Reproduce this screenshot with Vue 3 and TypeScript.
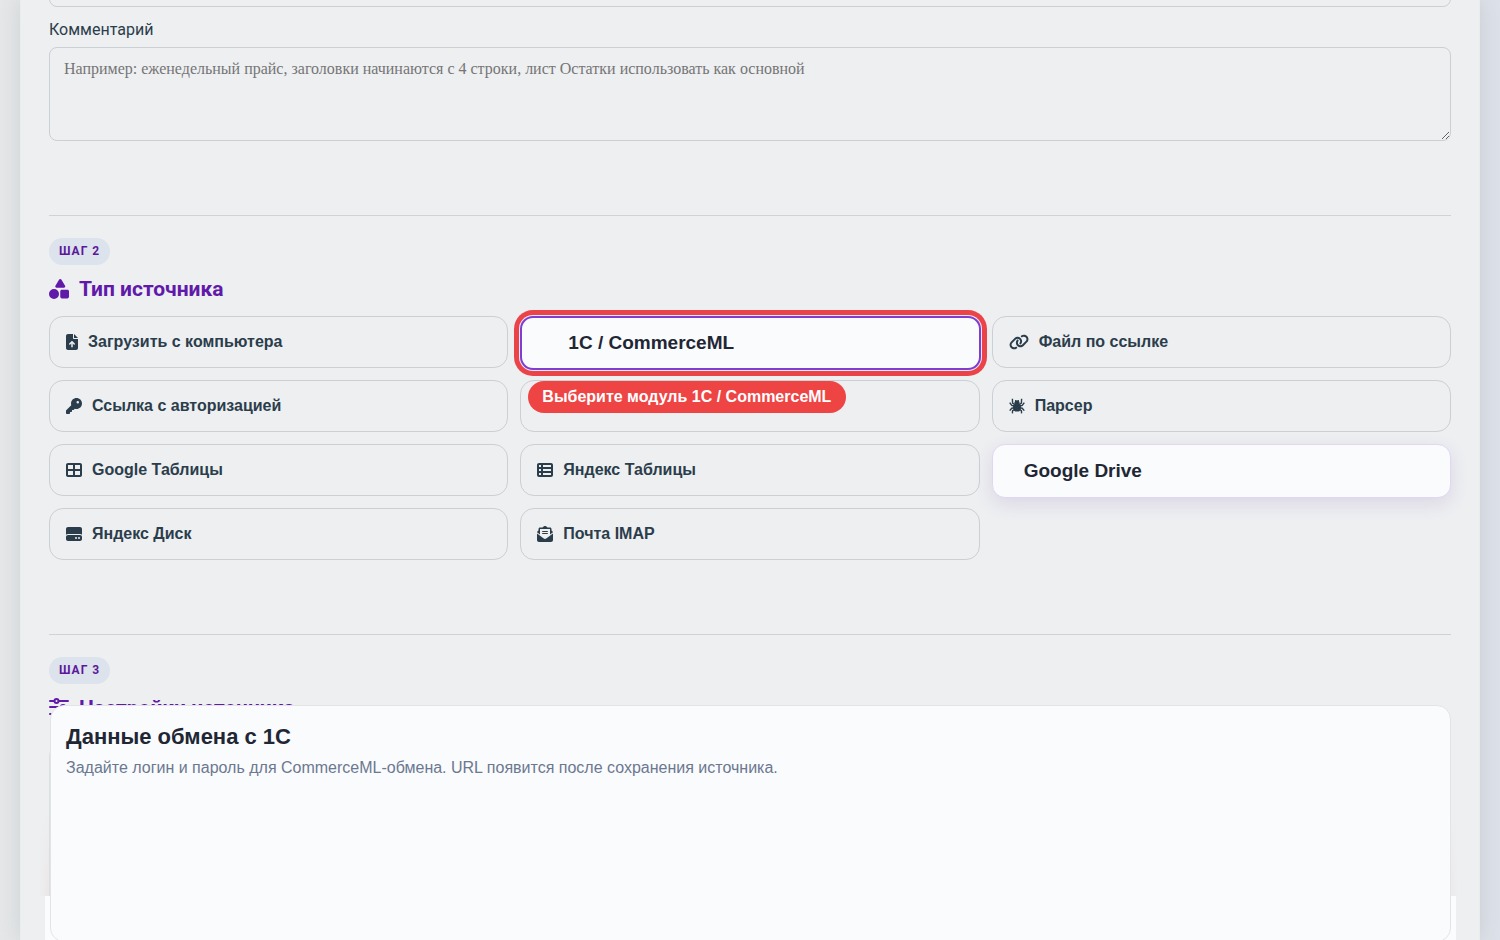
<script setup lang="ts">
import { ref } from 'vue'

interface Icon {
  w: number
  d: string
}

interface Source {
  id: string
  label: string
  icon?: string
  kind?: 'selected' | 'raised' | 'covered'
}

const icons: Record<string, Icon> = {
  file: { w: 384, d: 'M64 0C28.7 0 0 28.7 0 64L0 448c0 35.3 28.7 64 64 64l256 0c35.3 0 64-28.7 64-64l0-288-128 0c-17.7 0-32-14.3-32-32L224 0 64 0zM256 0l0 128 128 0L256 0zM216 408c0 13.3-10.7 24-24 24s-24-10.7-24-24l0-102.1-31 31c-9.4 9.4-24.6 9.4-33.9 0s-9.4-24.6 0-33.9l72-72c9.4-9.4 24.6-9.4 33.9 0l72 72c9.4 9.4 9.4 24.6 0 33.9s-24.6 9.4-33.9 0l-31-31L216 408z' },
  link: { w: 640, d: 'M579.8 267.7c56.5-56.5 56.5-148 0-204.5c-50-50-128.8-56.5-186.3-15.4l-1.6 1.1c-14.4 10.3-17.7 30.3-7.4 44.6s30.3 17.7 44.6 7.4l1.6-1.1c32.1-22.9 76-19.3 103.8 8.6c31.5 31.5 31.5 82.5 0 114L422.3 334.8c-31.5 31.5-82.5 31.5-114 0c-27.9-27.9-31.5-71.8-8.6-103.8l1.1-1.6c10.3-14.4 6.9-34.4-7.4-44.6s-34.4-6.9-44.6 7.4l-1.1 1.6C206.5 251.2 213 330 263 380c56.5 56.5 148 56.5 204.5 0L579.8 267.7zM60.2 244.3c-56.5 56.5-56.5 148 0 204.5c50 50 128.8 56.5 186.3 15.4l1.6-1.1c14.4-10.3 17.7-30.3 7.4-44.6s-30.3-17.7-44.6-7.4l-1.6 1.1c-32.1 22.9-76 19.3-103.8-8.6C74 372 74 321 105.5 289.5L217.7 177.2c31.5-31.5 82.5-31.5 114 0c27.9 27.9 31.5 71.8 8.6 103.9l-1.1 1.6c-10.3 14.4-6.9 34.4 7.4 44.6s34.4 6.9 44.6-7.4l1.1-1.6C433.5 260.8 427 182 377 132c-56.5-56.5-148-56.5-204.5 0L60.2 244.3z' },
  key: { w: 512, d: 'M336 352c97.2 0 176-78.8 176-176S433.2 0 336 0S160 78.8 160 176c0 18.7 2.9 36.8 8.3 53.7L7 391c-4.5 4.5-7 10.6-7 17l0 80c0 13.3 10.7 24 24 24l80 0c13.3 0 24-10.7 24-24l0-40 40 0c13.3 0 24-10.7 24-24l0-40 40 0c6.4 0 12.5-2.5 17-7l33.3-33.3c16.9 5.4 35 8.3 53.7 8.3zM376 96a40 40 0 1 1 0 80 40 40 0 1 1 0-80z' },
  grid: { w: 512, d: 'M448 96l0 128-160 0 0-128 160 0zm0 192l0 128-160 0 0-128 160 0zM224 224L64 224 64 96l160 0 0 128zM64 288l160 0 0 128L64 416l0-128zM64 32C28.7 32 0 60.7 0 96L0 416c0 35.3 28.7 64 64 64l384 0c35.3 0 64-28.7 64-64l0-320c0-35.3-28.7-64-64-64L64 32z' },
  list: { w: 512, d: 'M0 96C0 60.7 28.7 32 64 32l384 0c35.3 0 64 28.7 64 64l0 320c0 35.3-28.7 64-64 64L64 480c-35.3 0-64-28.7-64-64L0 96zm64 0l0 64 64 0 0-64L64 96zm384 0L192 96l0 64 256 0 0-64zM64 224l0 64 64 0 0-64-64 0zm384 0l-256 0 0 64 256 0 0-64zM64 352l0 64 64 0 0-64-64 0zm384 0l-256 0 0 64 256 0 0-64z' },
  drive: { w: 512, d: 'M0 96C0 60.7 28.7 32 64 32l384 0c35.3 0 64 28.7 64 64l0 184.4c-17-15.2-39.4-24.4-64-24.4L64 256c-24.6 0-47 9.2-64 24.4L0 96zM64 288l384 0c35.3 0 64 28.7 64 64l0 64c0 35.3-28.7 64-64 64L64 480c-35.3 0-64-28.7-64-64l0-64c0-35.3 28.7-64 64-64zM320 416a32 32 0 1 0 0-64 32 32 0 1 0 0 64zm128-32a32 32 0 1 0 -64 0 32 32 0 1 0 64 0z' },
  mail: { w: 512, d: 'M215.4 96L144 96l-36.2 0L96 96l0 8.8L96 144l0 40.4 0 89L.2 202.5c1.6-18.1 10.9-34.9 25.7-45.8L48 140.3 48 96c0-26.5 21.5-48 48-48l76.6 0 49.9-36.9C232.2 3.9 243.9 0 256 0s23.8 3.9 33.5 11L339.4 48 416 48c26.5 0 48 21.5 48 48l0 44.3 22.1 16.4c14.8 10.9 24.1 27.7 25.7 45.8L416 273.4l0-89 0-40.4 0-39.2 0-8.8-11.8 0L368 96l-71.4 0-81.3 0zM0 448L0 242.1 217.6 403.3c11.1 8.2 24.6 12.7 38.4 12.7s27.3-4.4 38.4-12.7L512 242.1 512 448c0 35.3-28.7 64-64 64L64 512c-35.3 0-64-28.7-64-64zM176 160l160 0c8.8 0 16 7.2 16 16s-7.2 16-16 16l-160 0c-8.8 0-16-7.2-16-16s7.2-16 16-16zm0 64l160 0c8.8 0 16 7.2 16 16s-7.2 16-16 16l-160 0c-8.8 0-16-7.2-16-16s7.2-16 16-16z' },
}

const sources: Source[] = [
  { id: 'upload', label: 'Загрузить с компьютера', icon: 'file' },
  { id: 'cml', label: '1С / CommerceML', kind: 'selected' },
  { id: 'url', label: 'Файл по ссылке', icon: 'link' },
  { id: 'auth', label: 'Ссылка с авторизацией', icon: 'key' },
  { id: 'api', label: '', kind: 'covered' },
  { id: 'parser', label: 'Парсер', icon: 'spider' },
  { id: 'gsheets', label: 'Google Таблицы', icon: 'grid' },
  { id: 'ysheets', label: 'Яндекс Таблицы', icon: 'list' },
  { id: 'gdrive', label: 'Google Drive', kind: 'raised' },
  { id: 'ydisk', label: 'Яндекс Диск', icon: 'drive' },
  { id: 'imap', label: 'Почта IMAP', icon: 'mail' },
]

const name = ref('')
const comment = ref('')
const current = ref('cml')
</script>

<template>
  <div class="page">
    <main class="panel">
      <section class="fields">
        <input v-model="name" class="control name" type="text" aria-label="Название" />
        <label class="caption" for="comment">Комментарий</label>
        <textarea
          id="comment"
          v-model="comment"
          class="control comment"
          placeholder="Например: еженедельный прайс, заголовки начинаются с 4 строки, лист Остатки использовать как основной"
        ></textarea>
      </section>

      <section class="step">
        <span class="badge">ШАГ 2</span>
        <h2 class="title">
          <svg class="title-icon" viewBox="0 0 512 512" aria-hidden="true">
            <path d="M315.4 15.5C309.7 5.9 299.2 0 288 0s-21.7 5.9-27.4 15.5l-96 160c-5.9 9.9-6.1 22.2-.4 32.2s16.3 16.2 27.8 16.2l192 0c11.5 0 22.2-6.2 27.8-16.2s5.5-22.3-.4-32.2l-96-160zM288 312l0 144c0 22.1 17.9 40 40 40l144 0c22.1 0 40-17.9 40-40l0-144c0-22.1-17.9-40-40-40l-144 0c-22.1 0-40 17.9-40 40zM128 512a128 128 0 1 0 0-256 128 128 0 1 0 0 256z" />
          </svg>
          Тип источника
        </h2>
        <div class="sources">
          <div v-for="s in sources" :key="s.id" class="cell">
            <button
              type="button"
              class="source"
              :class="s.kind"
              :aria-pressed="current === s.id"
              :aria-label="s.label || 'API'"
              @click="current = s.id"
            >
              <svg v-if="s.icon === 'spider'" class="icon square" viewBox="0 0 16 16" aria-hidden="true">
                <ellipse cx="8" cy="9.4" rx="4" ry="4.2" />
                <circle cx="8" cy="5" r="2.6" />
                <path class="legs" d="M6.800 4V2M9.200 4V2M6.200 7 3.600 5.200 3.400.8M9.800 7l2.600-1.800.2-4.400M6 8.200 2.800 7.400.7 4.600M10 8.200l3.200-.8 2.100-2.800M6 9.600l-3.200.6L.7 12.600M10 9.600l3.200.6 2.100 2.400M6.200 11l-2.600 1.600-.2 2.800M9.800 11l2.600 1.600.2 2.800" />
              </svg>
              <svg
                v-else-if="s.icon"
                class="icon"
                :viewBox="`0 0 ${icons[s.icon].w} 512`"
                aria-hidden="true"
              >
                <path :d="icons[s.icon].d" />
              </svg>
              <span>{{ s.label }}</span>
            </button>
            <div v-if="s.kind === 'selected'" class="hint" role="tooltip">Выберите модуль 1С / CommerceML</div>
          </div>
        </div>
      </section>

      <section class="step last">
        <span class="badge">ШАГ 3</span>
        <h2 class="title">
          <svg class="title-icon" viewBox="0 0 20 20" aria-hidden="true">
            <path class="lines" d="M1 3h4M10 3h9M1 9h10M17 9h2M1 16h3M9 16h10" />
            <circle class="lines" cx="7.500" cy="3" r="2" />
            <circle class="lines" cx="14" cy="9" r="2" />
            <circle class="lines" cx="6.500" cy="16" r="2" />
          </svg>
          Настройки источника
        </h2>
        <div class="settings"></div>
        <div class="footer"></div>
        <article class="exchange">
          <h3>Данные обмена с 1С</h3>
          <p>Задайте логин и пароль для CommerceML-обмена. URL появится после сохранения источника.</p>
        </article>
      </section>
    </main>
  </div>
</template>

<style>
body {
  margin: 0;
}
</style>

<style scoped>
* {
  box-sizing: border-box;
}
.page {
  height: 100vh;
  overflow: hidden;
  display: flex;
  padding: 0 20px;
  background: linear-gradient(90deg, #e5e7e9 0%, #e5e7e9 50%, #dde1e9 100%);
  color: #2b3d4b;
  font-family: Roboto, 'Liberation Sans', sans-serif;
  font-size: 16px;
}
.panel {
  flex: 1;
  min-width: 0;
  display: flex;
  flex-direction: column;
  padding: 0 28px;
  border: solid #e9edee;
  border-width: 0 1px;
  background: #edeff1;
  box-shadow: 0 0 20px rgba(150, 160, 158, 0.3);
}
.fields {
  display: flex;
  flex-direction: column;
  padding-bottom: 74px;
}
.control {
  width: 100%;
  border: 1px solid #cbd0d4;
  border-radius: 8px;
  background: transparent;
  color: inherit;
}
.name {
  height: 46px;
  margin-top: -39px;
}
.caption {
  margin-top: 11px;
  line-height: 24px;
}
.comment {
  height: 94px;
  margin-top: 5px;
  padding: 12px 14px;
  font-family: 'Liberation Serif', serif;
  font-size: 16px;
  line-height: 18px;
  resize: vertical;
}
.comment::placeholder {
  color: #757575;
}
.step {
  display: flex;
  flex-direction: column;
  align-items: stretch;
  padding: 22px 0 74px;
  border-top: 1px solid #cdd3d6;
}
.badge {
  align-self: flex-start;
  padding: 0 10px;
  border-radius: 14px;
  background: #dce3ec;
  color: #5b189a;
  font-size: 12px;
  font-weight: 700;
  line-height: 27px;
  letter-spacing: 1px;
}
.title {
  display: flex;
  align-items: center;
  gap: 10px;
  margin: 12px 0 15px;
  color: #6119aa;
  font-size: 21px;
  font-weight: 700;
  line-height: 24px;
}
.title-icon {
  width: 20px;
  height: 20px;
  fill: currentColor;
}
.lines {
  fill: none;
  stroke: currentColor;
  stroke-width: 2;
  stroke-linecap: round;
}
.sources {
  display: grid;
  grid-template-columns: repeat(3, minmax(0, 1fr));
  grid-auto-rows: 52px;
  gap: 12px;
}
.cell {
  position: relative;
  display: flex;
}
.source {
  flex: 1;
  display: flex;
  align-items: center;
  gap: 10px;
  padding: 0 16px;
  border: 1px solid #cccfd3;
  border-radius: 14px;
  background: transparent;
  color: #2b3d4b;
  font-family: 'Liberation Sans', Arial, sans-serif;
  font-size: 16px;
  font-weight: 700;
  line-height: 20px;
  text-align: left;
}
.icon {
  height: 16px;
  fill: currentColor;
}
.square {
  width: 16px;
}
.legs {
  fill: none;
  stroke: currentColor;
  stroke-width: 1.4;
}
.selected,
.raised {
  height: 54px;
  background: #fafbfd;
  color: #1f2735;
  font-size: 19px;
}
.selected {
  margin-right: -1px;
  padding-left: 46px;
  border: 2px solid #7c3fcf;
  border-radius: 13px;
  box-shadow: 0 0 0 1px #f3e6f5, 0 0 0 6px #ea4448;
}
.raised {
  padding-left: 31px;
  border-color: #e0d8f2;
  border-radius: 13px;
  box-shadow: 0 6px 18px rgba(110, 70, 160, 0.14);
}
.hint {
  position: absolute;
  z-index: 2;
  top: 65px;
  left: 8px;
  padding: 0 15px 0 14px;
  border-radius: 16px;
  background: #ef4444;
  color: #fff;
  font-family: 'Liberation Sans', Arial, sans-serif;
  font-size: 16px;
  font-weight: 700;
  line-height: 32px;
  white-space: nowrap;
}
.last {
  position: relative;
  flex: 1;
  padding-bottom: 0;
}
.settings {
  position: absolute;
  top: 108px;
  right: 0;
  bottom: 46px;
  left: 0;
  z-index: 1;
  border: solid #dcdfe2;
  border-width: 1px 1px 0;
  border-radius: 14px 14px 0 0;
}
.footer {
  position: absolute;
  right: -5px;
  bottom: 0;
  left: -4px;
  height: 46px;
  background: #fbfcfd;
}
.footer::before {
  content: '';
  position: absolute;
  right: -2px;
  bottom: 46px;
  left: -6px;
  height: 84px;
  background: linear-gradient(90deg, #edeff1, rgba(237, 239, 241, 0) 12px calc(100% - 12px), #edeff1),
    linear-gradient(#edeff1, #ece4e5);
}
.exchange {
  position: relative;
  z-index: 2;
  flex: none;
  height: 237px;
  margin: -30px 0 0 1px;
  padding: 18px 15px;
  border: 1px solid #e2e4e8;
  border-radius: 14px;
  background: #fafbfd;
  font-family: 'Liberation Sans', Arial, sans-serif;
}
.exchange h3 {
  margin: 0;
  color: #1f2735;
  font-size: 22px;
  line-height: 26px;
}
.exchange p {
  margin: 8px 0 0;
  color: #6b7890;
  font-size: 16px;
  line-height: 20px;
}
</style>
